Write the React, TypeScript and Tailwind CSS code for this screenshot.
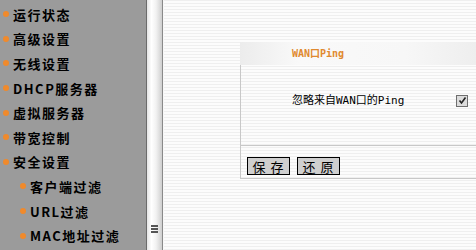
const menu = [
  { label: '运行状态', sub: false },
  { label: '高级设置', sub: false },
  { label: '无线设置', sub: false },
  { label: 'DHCP服务器', sub: false },
  { label: '虚拟服务器', sub: false },
  { label: '带宽控制', sub: false },
  { label: '安全设置', sub: false },
  { label: '客户端过滤', sub: true },
  { label: 'URL过滤', sub: true },
  { label: 'MAC地址过滤', sub: true },
];

const Sidebar = () => (
  <div className="w-[146px] h-full bg-[#9b9b9b] pt-[2px]">
    {menu.map((m) => (
      <div
        key={m.label}
        className={`flex items-center h-[24.6px] ${m.sub ? 'pl-[20px]' : 'pl-[3px]'}`}
      >
        <span className="w-[6px] h-[6px] rounded-full bg-[#f08a2c] mr-[4px] shrink-0" />
        <span className="text-[13px] font-bold text-black tracking-[1.5px] leading-none">
          {m.label}
        </span>
      </div>
    ))}
  </div>
);

const Scrollbar = () => (
  <div className="w-[18px] h-full flex bg-[#a0a0a0]">
    <div className="w-[1px] bg-[#6b6b6b]" />
    <div className="flex-1 flex flex-col justify-end items-center pb-[17px] bg-[linear-gradient(90deg,#e4e4e4,#ffffff_30%,#f2f2f2_60%,#cfcfcf)]">
      <div className="flex flex-col gap-[1px]">
        <div className="w-[7px] h-[2px] bg-[#555]" />
        <div className="w-[7px] h-[2px] bg-[#555]" />
        <div className="w-[7px] h-[2px] bg-[#555]" />
      </div>
    </div>
    <div className="w-[1px] bg-[#8a8a8a]" />
    <div className="w-[1px] bg-[#f8f8f8]" />
  </div>
);

export default function App() {
  return (
    <div className="w-[476px] h-[250px] flex overflow-hidden font-['Noto_Sans_CJK_SC',sans-serif]">
      <Sidebar />
      <Scrollbar />
      <div className="flex-1 h-full pl-[76px] pt-[42px] bg-[repeating-linear-gradient(180deg,#efefef_0px,#efefef_1px,#fcfcfc_1px,#fcfcfc_3px)]">
        <div className="h-[23px] flex items-center pl-[52px] bg-[linear-gradient(90deg,#ececec,#f9f9f9_25%,#f7f7f7_70%,#eeeeee)]">
          <span className="font-['DejaVu_Sans_Mono','Noto_Sans_CJK_SC',monospace] text-[10px] font-bold text-[#e08a30] leading-none">
            WAN口Ping
          </span>
        </div>
        <div className="border-l border-b border-[#c8c8c8] h-[114px] flex flex-col">
          <div className="h-[80px] flex items-center pl-[51px] pr-[8px] pb-[9px]">
            <span className="flex-1 text-[11px] text-black leading-none font-['DejaVu_Sans_Mono','Noto_Sans_CJK_SC',monospace]">
              忽略来自WAN口的Ping
            </span>
            <span className="w-[12px] h-[12px] border border-[#6e6e6e] bg-[#dcdcdc] flex items-center justify-center">
              <svg width="9" height="9" viewBox="0 0 9 9">
                <path d="M1.5 4.5 L3.5 7 L7.5 1.5" stroke="#222" strokeWidth="1.6" fill="none" />
              </svg>
            </span>
          </div>
          <div className="h-[1px] bg-[#c8c8c8]" />
          <div className="flex items-start gap-[7px] pl-[6px] pt-[11px]">
            <button className="w-[43px] h-[18px] border border-black bg-[#cfcfcf] text-[13px] leading-none text-black tracking-[5px] pl-[4px]">
              保存
            </button>
            <button className="w-[43px] h-[18px] border border-black bg-[#cfcfcf] text-[13px] leading-none text-black tracking-[5px] pl-[4px]">
              还原
            </button>
          </div>
        </div>
      </div>
    </div>
  );
}
